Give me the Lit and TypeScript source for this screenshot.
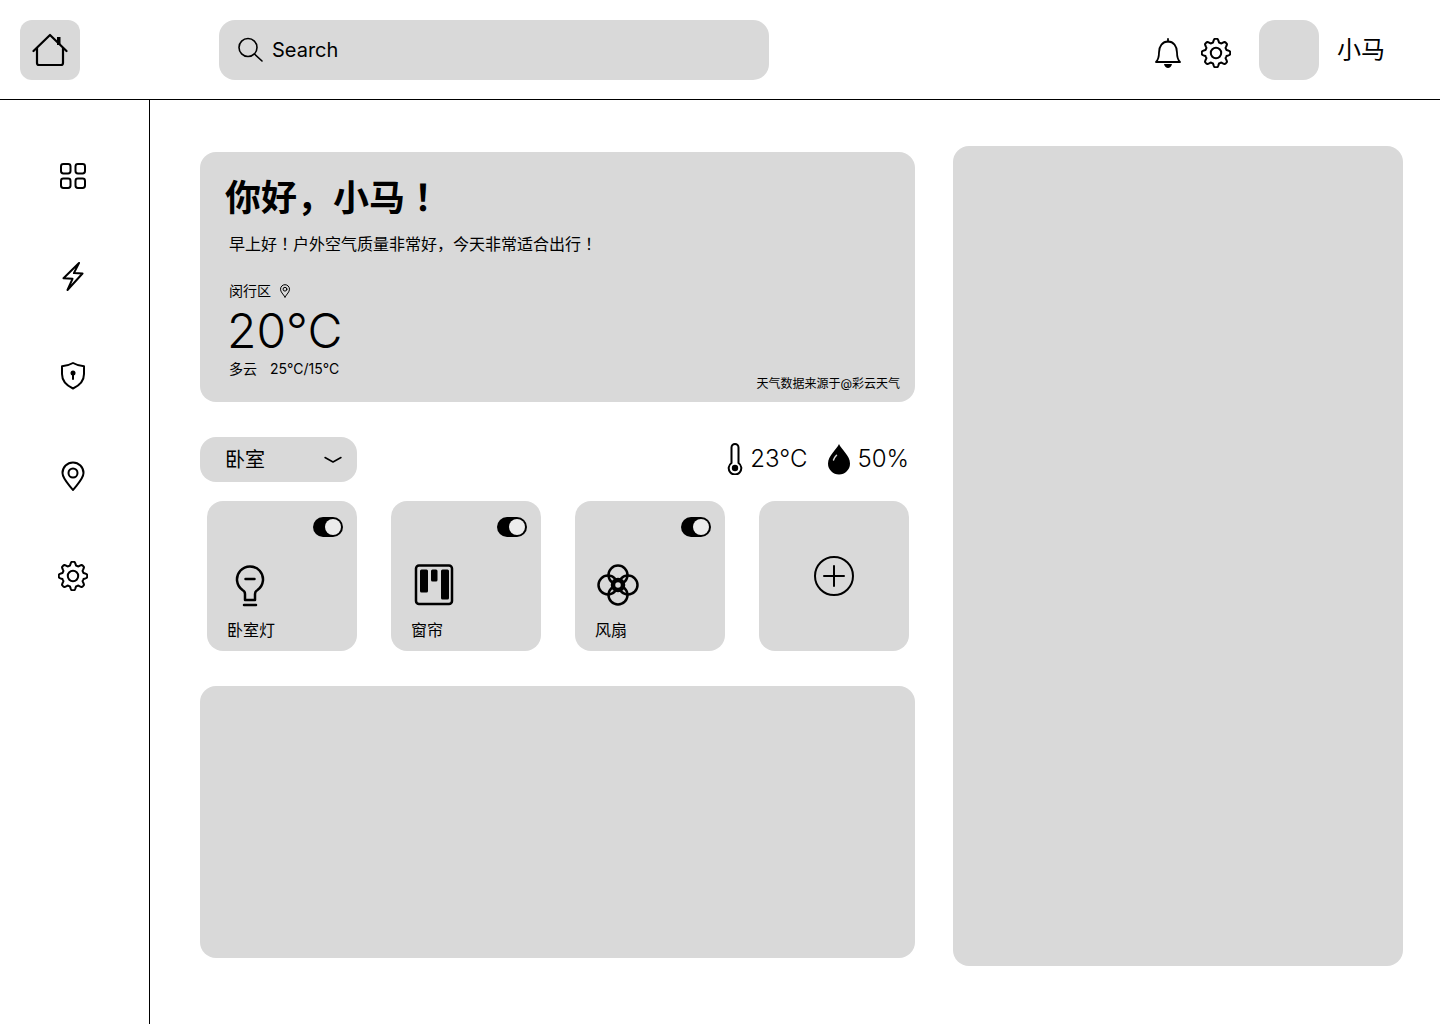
import { LitElement, css, html, svg } from "lit";
import { customElement } from "lit/decorators.js";

// 8-tooth cog outline, centred on 15,15
function cogPath(outer = 14.2, inner = 10.8) {
  const pts: string[] = [];
  for (let i = 0; i < 160; i++) {
    const a = (i / 160) * Math.PI * 2;
    const wave = Math.max(-1, Math.min(1, Math.cos(a * 8) * 1.5));
    const r = (outer + inner) / 2 + ((outer - inner) / 2) * wave;
    const x = 15 + r * Math.sin(a);
    const y = 15 - r * Math.cos(a);
    pts.push(`${x.toFixed(2)} ${y.toFixed(2)}`);
  }
  return `M${pts.join("L")}Z`;
}

const cog = html`<svg class="ic" width="30" height="30" viewBox="0 0 30 30">
  <path d=${cogPath()} />
  <circle cx="15" cy="15" r="5.2" />
</svg>`;

const navIcons = [
  svg`<rect x="3" y="3" width="9.5" height="9.5" rx="2.4" /><rect x="17.5" y="3" width="9.5" height="9.5" rx="2.4" /><rect x="3" y="17.5" width="9.5" height="9.5" rx="2.4" /><rect x="17.5" y="17.5" width="9.5" height="9.5" rx="2.4" />`,
  svg`<path d="M21 2 5.500 17.200l9 .6L9.500 29 24.500 12.500l-8.600-.4z" />`,
  svg`<path d="M15 2c3.500 2 7.500 3 11 3.300V13c0 7-4.500 11.500-11 14.500C8.500 24.500 4 20 4 13V5.300C7.500 5 11.500 4 15 2z" /><circle class="solid" cx="15" cy="12" r="2.500" /><path d="M15 13v5" />`,
  svg`<path d="M15 29C10 22.500 4.500 17.500 4.500 12a10.500 10.500 0 0 1 21 0C25.500 17.500 20 22.500 15 29z" /><circle cx="15" cy="12" r="4.500" />`,
  svg`<path d=${cogPath()} /><circle cx="15" cy="15" r="5.200" />`,
];

const devices = [
  {
    name: "卧室灯",
    icon: svg`<path d="M18 37V31c0-2-.6-3-2.500-4A13 13 0 1 1 30.500 27c-1.900 1-2.500 2-2.500 4v6z" /><path d="M18.500 16h9" /><path d="M17 42h12" />`,
  },
  {
    name: "窗帘",
    icon: svg`<rect x="5" y="2.500" width="36" height="38.500" rx="3" /><rect class="solid" x="9" y="6.500" width="8" height="23" rx="1.500" /><rect class="solid" x="20" y="6.500" width="6.500" height="12" rx="1.500" /><rect class="solid" x="30" y="6.500" width="8" height="30" rx="1.500" />`,
  },
  {
    name: "风扇",
    icon: svg`<circle cx="23" cy="12" r="9.500" /><circle cx="23" cy="32" r="9.500" /><circle cx="13" cy="22" r="9.500" /><circle cx="33" cy="22" r="9.500" /><circle class="fan-hub" cx="23" cy="22" r="5" />`,
  },
];

@customElement("app-root")
export class AppRoot extends LitElement {
  render() {
    return html`
      <header class="topbar">
        <div class="home">
          <svg class="ic home-ic" width="36" height="36" viewBox="0 0 36 36">
            <path d="M1.500 19 18 3l16.500 16" />
            <path d="M5 16v15a2 2 0 0 0 2 2h22a2 2 0 0 0 2-2V16" />
            <rect class="solid" x="25" y="5" width="3.500" height="8" />
          </svg>
        </div>
        <div class="search">
          <svg class="ic thin" width="26" height="26" viewBox="0 0 26 26">
            <circle cx="10" cy="10.500" r="9" />
            <path d="M16.500 17 24 24" />
          </svg>
          <span>Search</span>
        </div>
        <div class="account">
          <svg class="ic bell" width="30" height="32" viewBox="0 0 30 32">
            <path d="M3 25c2.500-2.500 3-5 3-9.500C6 9 9.500 4.500 15 4.500S24 9 24 15.500c0 4.500.5 7 3 9.500z" />
            <path d="M15 2v2.500" />
            <path class="solid" d="M11 27h8c-.5 2.700-2.300 4-4 4s-3.500-1.300-4-4z" />
          </svg>
          <span class="cog">${cog}</span>
          <div class="avatar"></div>
          <span class="user">小马</span>
        </div>
      </header>
      <div class="body">
        <nav class="sidebar">
          ${navIcons.map(
            (icon) => html`<svg class="ic" width="30" height="30" viewBox="0 0 30 30">${icon}</svg>`
          )}
        </nav>
        <main class="content">
          <div class="left">
            <section class="hero">
              <h1>你好，小马<span class="bang">！</span></h1>
              <p class="greet">早上好<span class="bang">！</span>户外空气质量非常好，今天非常适合出行<span class="bang">！</span></p>
              <div class="place">
                <span>闵行区</span>
                <svg class="ic hair" width="12" height="14" viewBox="0 0 12 14">
                  <path d="M6 13C4 10 1.500 7.800 1.500 5.200a4.500 4.500 0 0 1 9 0C10.500 7.800 8 10 6 13z" />
                  <circle cx="6" cy="5.200" r="1.900" />
                </svg>
              </div>
              <div class="temp">20°C</div>
              <div class="hero-foot">
                <div class="range"><span>多云</span><span>25°C/15°C</span></div>
                <div class="credit">天气数据来源于@彩云天气</div>
              </div>
            </section>

            <div class="room-row">
              <div class="room">
                <span>卧室</span>
                <svg class="ic chev" width="18" height="8" viewBox="0 0 18 8">
                  <path d="M1 1.500 9 6l8-4.500" />
                </svg>
              </div>
              <div class="climate">
                <svg class="ic thermo" width="16" height="32" viewBox="0 0 16 32">
                  <path d="M4.500 20V4.500a3.500 3.500 0 0 1 7 0V20a6.300 6.300 0 1 1-7 0z" />
                  <circle class="solid" cx="8" cy="25" r="3.200" />
                </svg>
                <span class="reading">23°C</span>
                <svg class="drop" width="24" height="32" viewBox="0 0 24 32">
                  <path d="M12 1c2 5 11 11.500 11 19.500a11 11 0 0 1-22 0C1 12.500 10 6 12 1z" fill="#000" />
                  <path d="M6.500 17c.5-2 1.500-3.300 3-4.800" fill="none" stroke="#d9d9d9" stroke-width="1.500" stroke-linecap="round" />
                </svg>
                <span class="reading">50%</span>
              </div>
            </div>

            <div class="devices">
              ${devices.map(
                (d) => html`
                  <div class="device">
                    <div class="toggle"><i></i></div>
                    <svg class="ic heavy dev-icon" width="46" height="46" viewBox="0 0 46 46">${d.icon}</svg>
                    <div class="dev-name">${d.name}</div>
                  </div>
                `
              )}
              <div class="device add">
                <svg class="ic" width="42" height="42" viewBox="0 0 42 42">
                  <circle cx="21" cy="21" r="19" />
                  <path d="M21 11v20M11 21h20" />
                </svg>
              </div>
            </div>

            <div class="panel"></div>
          </div>
          <aside class="right"></aside>
        </main>
      </div>
    `;
  }

  static styles = css`
    :host {
      display: block;
      width: 1440px;
      height: 1024px;
      overflow: hidden;
      background: #fff;
      color: #000;
      font-family: Inter, "Noto Sans CJK SC", sans-serif;
    }

    .ic {
      display: block;
      flex: none;
      fill: none;
      stroke: #000;
      stroke-width: 2;
      stroke-linecap: round;
      stroke-linejoin: round;
    }

    .ic .solid {
      fill: #000;
      stroke: none;
    }

    .ic.heavy {
      stroke-width: 2.5;
    }

    .ic.home-ic {
      stroke-width: 2.2;
    }

    .ic.thin {
      stroke-width: 1.6;
    }

    .ic.hair {
      stroke-width: 1;
    }

    .ic.chev {
      stroke-width: 1.5;
    }

    .topbar {
      display: flex;
      align-items: center;
      box-sizing: border-box;
      height: 100px;
      padding: 0 55px 0 20px;
      border-bottom: 1px solid #000;
    }

    .home {
      display: flex;
      align-items: center;
      justify-content: center;
      width: 60px;
      height: 60px;
      border-radius: 12px;
      background: #d9d9d9;
    }

    .search {
      display: flex;
      align-items: center;
      gap: 8px;
      box-sizing: border-box;
      width: 550px;
      height: 60px;
      margin-left: 139px;
      padding-left: 19px;
      border-radius: 16px;
      background: #d9d9d9;
      font-size: 20px;
    }

    .account {
      display: flex;
      align-items: center;
      margin-left: auto;
    }

    .ic.bell {
      stroke-width: 1.8;
      margin-top: 6px;
    }

    .cog {
      margin: 6px 28px 0 18px;
    }

    .avatar {
      width: 60px;
      height: 60px;
      border-radius: 16px;
      background: #d9d9d9;
    }

    .user {
      margin-left: 18px;
      font-size: 24px;
      line-height: 1;
    }

    .body {
      display: flex;
      height: 924px;
    }

    .sidebar {
      display: flex;
      flex-direction: column;
      align-items: center;
      gap: 70px;
      box-sizing: border-box;
      width: 150px;
      padding: 61px 4px 0 0;
      border-right: 1px solid #000;
    }

    .content {
      display: flex;
      align-items: flex-start;
      gap: 38px;
      padding-left: 50px;
    }

    .left {
      display: flex;
      flex-direction: column;
      width: 715px;
      padding-top: 52px;
    }

    .hero {
      display: flex;
      flex-direction: column;
      box-sizing: border-box;
      height: 250px;
      padding: 19px 15px 0 25px;
      border-radius: 16px;
      background: #d9d9d9;
    }

    h1 {
      margin: 0;
      font-family: "Noto Sans CJK SC", sans-serif;
      font-size: 36px;
      line-height: 48px;
      font-weight: 700;
    }

    .greet {
      margin: 12px 0 0 4px;
      font-family: "Noto Sans CJK SC", sans-serif;
      font-size: 16px;
      line-height: 24px;
    }

    /* the JP cut centres the full-width ! in its box */
    .bang {
      font-family: "Noto Sans CJK JP", sans-serif;
    }

    .place {
      display: flex;
      align-items: center;
      gap: 8px;
      margin: 26px 0 0 4px;
      font-size: 14px;
      line-height: 20px;
    }

    .temp {
      margin: 2px 0 0 2px;
      font-size: 48px;
      font-weight: 300;
      line-height: 56px;
    }

    .hero-foot {
      display: flex;
      justify-content: space-between;
      align-items: flex-start;
      margin-left: 4px;
    }

    .range {
      display: flex;
      gap: 13px;
      font-size: 14px;
      line-height: 20px;
    }

    .credit {
      margin-top: 16px;
      font-size: 12px;
      line-height: 18px;
    }

    .room-row {
      display: flex;
      align-items: center;
      justify-content: space-between;
      height: 45px;
      margin-top: 35px;
    }

    .room {
      display: flex;
      align-items: center;
      justify-content: space-between;
      box-sizing: border-box;
      width: 157px;
      height: 45px;
      padding: 0 15px 0 25px;
      border-radius: 16px;
      background: #d9d9d9;
      font-size: 20px;
      line-height: 26px;
    }

    .room span {
      margin-top: 1px;
    }

    .climate {
      display: flex;
      align-items: center;
      padding-right: 6px;
      font-size: 24px;
      font-weight: 300;
    }

    .thermo {
      margin: -2px 7px 0 0;
    }

    .drop {
      display: block;
      margin: -2px 6px 0 20px;
    }

    .reading {
      line-height: 30px;
      margin-top: -1px;
    }

    .devices {
      display: flex;
      gap: 34px;
      margin: 19px 0 0 7px;
    }

    .device {
      position: relative;
      box-sizing: border-box;
      width: 150px;
      height: 150px;
      padding: 62px 0 0 20px;
      border-radius: 16px;
      background: #d9d9d9;
    }

    .device.add {
      display: flex;
      align-items: center;
      justify-content: center;
      padding: 0;
    }

    .toggle {
      position: absolute;
      top: 16px;
      right: 14px;
      width: 30px;
      height: 20px;
      border-radius: 10px;
      background: #000;
    }

    .toggle i {
      position: absolute;
      top: 2px;
      right: 2px;
      width: 16px;
      height: 16px;
      border-radius: 50%;
      background: #ececec;
    }

    .dev-icon .fan-hub {
      fill: #d9d9d9;
      stroke-width: 4.5;
    }

    .dev-name {
      margin-top: 10px;
      font-size: 16px;
      line-height: 22px;
    }

    .panel {
      height: 272px;
      margin-top: 35px;
      border-radius: 16px;
      background: #d9d9d9;
    }

    .right {
      width: 450px;
      height: 820px;
      margin-top: 46px;
      border-radius: 16px;
      background: #d9d9d9;
    }
  `;
}
